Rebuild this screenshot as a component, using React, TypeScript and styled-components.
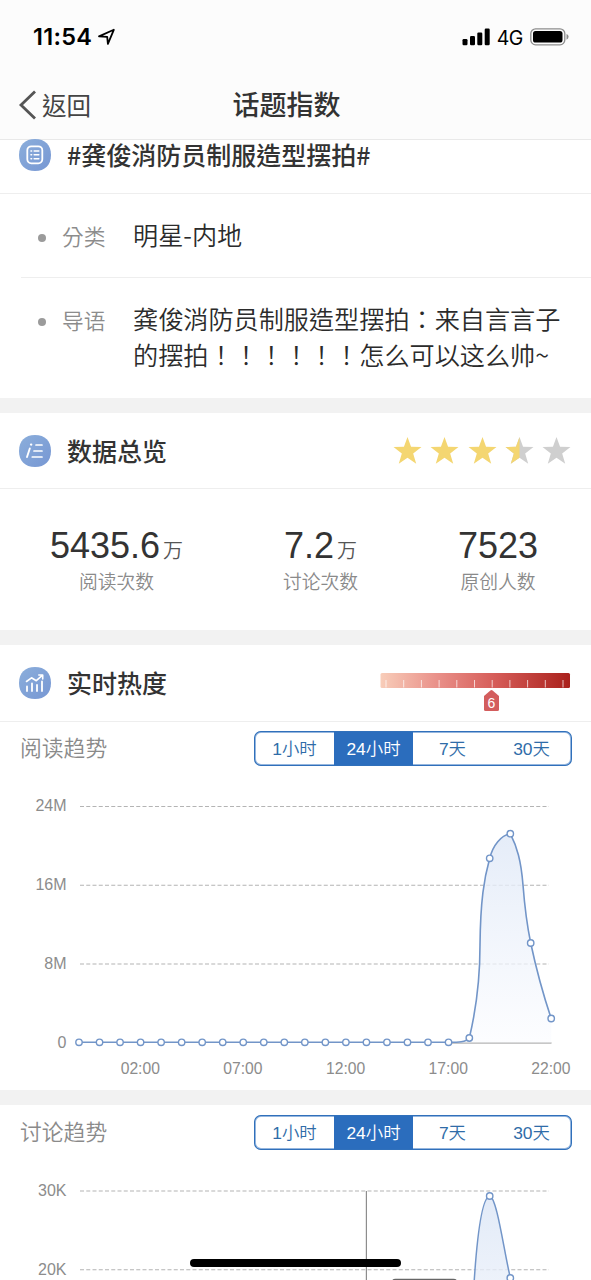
import React from "react";
import styled, { createGlobalStyle } from "styled-components";

const GlobalStyle = createGlobalStyle`
  * { box-sizing: border-box; }
  html, body { margin: 0; padding: 0; background: #fff; }
  body {
    font-family: "Liberation Sans", "Noto Sans CJK TC", sans-serif;
    color: #333;
    overflow: hidden;
  }
`;

const Screen = styled.div`
  position: relative;
  width: 591px;
  height: 1280px;
  overflow: hidden;
  background: #fff;
`;

const Header = styled.header`
  height: 140px;
  background: #fcfcfc;
  border-bottom: 1px solid #e9e9e9;
`;

const StatusBar = styled.div`
  display: flex;
  justify-content: space-between;
  align-items: center;
  height: 72px;
  padding: 2px 22px 0 33px;
  color: #000;
`;

const StatusGroup = styled.div<{ $gap: number }>`
  display: flex;
  align-items: center;
  gap: ${(p) => p.$gap}px;
`;

const Clock = styled.span`
  font: 600 23.5px/28px Inter, sans-serif;
  letter-spacing: 0.3px;
`;

const Network = styled.span`
  font: 400 19.5px/28px Inter, sans-serif;
  letter-spacing: -0.4px;
  padding-top: 1px;
`;

const NavBar = styled.div`
  display: grid;
  grid-template-columns: 150px 1fr 168px;
  align-items: center;
  height: 66px;
  padding: 0 18px;
`;

const Back = styled.button`
  display: flex;
  align-items: center;
  gap: 5px;
  padding: 0;
  border: 0;
  background: none;
  color: #444;
  font: 400 24.5px/34px "Noto Sans CJK TC", sans-serif;

  span { padding-bottom: 1px; }
`;

const NavTitle = styled.h1`
  margin: 0;
  padding-bottom: 3px;
  text-align: center;
  font: 500 27px/40px "Noto Sans CJK TC", sans-serif;
  color: #333;
`;

const SectionHead = styled.div<{ $height: number; $lift?: number }>`
  display: flex;
  align-items: center;
  gap: 16px;
  height: ${(p) => p.$height}px;
  padding: 0 20px ${(p) => p.$lift ?? 0}px 19px;
  border-bottom: 1px solid #eeeeee;
`;

const SectionTitle = styled.h2`
  flex: 1;
  margin: 0;
  padding-bottom: 2px;
  font: 500 25px/30px "Noto Sans CJK TC", sans-serif;
  color: #333;
`;

const DetailRow = styled.div<{ $height: number; $line?: boolean }>`
  display: flex;
  align-items: flex-start;
  height: ${(p) => p.$height}px;
  margin-left: 21px;
  padding: 22px 20px 0 17px;
  border-bottom: ${(p) => (p.$line ? "1px solid #eeeeee" : "0")};
`;

const Bullet = styled.i`
  width: 8px;
  height: 8px;
  margin: 18px 16px 0 0;
  border-radius: 50%;
  background: #9b9b9b;
`;

const DetailLabel = styled.span`
  width: 71px;
  font: 350 21.7px/36px "Noto Sans CJK TC", sans-serif;
  color: #8c8c8c;
  padding-top: 2px;
`;

const DetailText = styled.p`
  flex: 1;
  margin: 0;
  white-space: nowrap;
  font: 350 25.15px/36px "Noto Sans CJK TC", sans-serif;
  color: #2b2b2b;
`;

const Divider = styled.div<{ $height: number }>`
  height: ${(p) => p.$height}px;
  background: #f2f2f2;
`;

const Stars = styled.div`
  display: flex;
  gap: 8.2px;
`;

const Stats = styled.div`
  display: grid;
  grid-template-columns: 233px 175px 1fr;
  height: 141px;
  padding-top: 34px;
`;

const Stat = styled.div`
  display: flex;
  flex-direction: column;
  align-items: center;

  &:last-child { padding-right: 3px; }
`;

const StatValue = styled.div`
  height: 44px;
  font: 400 36px/45px "Liberation Sans", sans-serif;
  color: #333;
  white-space: nowrap;
`;

const Unit = styled.span`
  display: inline-block;
  margin-left: 3px;
  font: 350 20px/30px "Noto Sans CJK TC", sans-serif;
  color: #555;
`;

const StatLabel = styled.div`
  font: 350 18.8px/27px "Noto Sans CJK TC", sans-serif;
  color: #8a8a8a;
`;

const TrendHead = styled.div<{ $top: number }>`
  display: flex;
  justify-content: space-between;
  align-items: flex-start;
  height: ${(p) => p.$top + 44}px;
  padding: ${(p) => p.$top}px 19px 0 20px;
`;

const TrendTitle = styled.h3`
  margin: 0;
  font: 350 21.8px/32px "Noto Sans CJK TC", sans-serif;
  color: #8a8a8a;
`;

const Tabs = styled.div`
  position: relative;
  display: grid;
  grid-template-columns: repeat(4, 1fr);
  width: 318px;
  height: 35px;
  padding: 1px;
  overflow: hidden;
  border-radius: 7px;
  background: #3472b8;

  &::after {
    content: "";
    position: absolute;
    inset: 0;
    border: 2px solid rgba(43, 109, 189, 0.5);
    border-radius: 7px;
    pointer-events: none;
  }
`;

const Tab = styled.button<{ $active?: boolean }>`
  padding: 0;
  border: 0;
  background: ${(p) => (p.$active ? "#2b6dbd" : "#fff")};
  color: ${(p) => (p.$active ? "#fff" : "#2f6ca8")};
  font: 350 17.4px/32px "Liberation Sans", "Noto Sans CJK TC", sans-serif;

  &:first-child { border-radius: 6px 0 0 6px; }
  &:last-child { border-radius: 0 6px 6px 0; }
`;

const Chart = styled.svg`
  display: block;
  font: 16px "Liberation Sans", sans-serif;
`;

const Heat = styled.svg`
  display: block;
  margin-top: 18px;
`;

const HomeIndicator = styled.div`
  position: absolute;
  left: 190px;
  bottom: 13px;
  width: 211px;
  height: 8px;
  border-radius: 4px;
  background: #000;
`;

const RANGES = ["1小时", "24小时", "7天", "30天"];

function RangeTabs() {
  return (
    <Tabs>
      {RANGES.map((r) => (
        <Tab key={r} $active={r === "24小时"}>{r}</Tab>
      ))}
    </Tabs>
  );
}

function Badge({ children, id }: { children: React.ReactNode; id: string }) {
  return (
    <svg width="32" height="32" viewBox="0 0 32 32" fill="none">
      <defs>
        <linearGradient id={id} x1="0" y1="0" x2="1" y2="1">
          <stop offset="0" stopColor="#8baedb" />
          <stop offset="1" stopColor="#7797d3" />
        </linearGradient>
      </defs>
      <path d="M16 0C26 0 32 6 32 16S26 32 16 32 0 26 0 16 6 0 16 0Z" fill={`url(#${id})`} />
      {children}
    </svg>
  );
}

const STAR = "M14.5 0.5L18 10.2L28.3 10.5L20.1 16.8L23.1 27L14.5 21.1L5.9 27L8.9 16.8L0.7 10.5L11 10.2Z";

function Star({ fill }: { fill: "full" | "half" | "none" }) {
  return (
    <svg width="29" height="29" viewBox="0.2 -0.4 28.6 28.6">
      <path d={STAR} fill={fill === "full" ? "#f4d671" : "#cfcfcf"} />
      {fill === "half" && (
        <path d="M14.5 0.5V21.1L5.9 27L8.9 16.8L0.7 10.5L11 10.2Z" fill="#f4d671" />
      )}
    </svg>
  );
}

function HeatScale() {
  return (
    <Heat width="191" height="42" viewBox="0 0 191 42">
      <defs>
        <linearGradient id="heat">
          <stop offset="0" stopColor="#f8cdb9" />
          <stop offset="0.3" stopColor="#e99089" />
          <stop offset="0.6" stopColor="#d65d59" />
          <stop offset="1" stopColor="#aa211c" />
        </linearGradient>
      </defs>
      <rect x="0.5" y="2" width="189.5" height="15" rx="1.5" fill="url(#heat)" />
      {Array.from({ length: 11 }, (_, i) => (
        <path key={i} d={`M${6 + i * 17.7} 9V16.5`} stroke="#fff" strokeOpacity="0.7" />
      ))}
      <path d="M111.5 19Q112 19 112.6 19.5L119 25V38.5Q119 40 117.5 40H105.5Q104 40 104 38.5V25L110.4 19.5Q111 19 111.5 19Z" fill="#d35d5d" />
      <text x="111.5" y="36.5" textAnchor="middle" fontSize="14" fontFamily="Liberation Sans" fill="#fff">6</text>
    </Heat>
  );
}

const STEP = 20.53;
const GRID = { stroke: "#b4b4b4", strokeWidth: 1.1, strokeDasharray: "4 2.25" };

function AreaFill({ id, y2 }: { id: string; y2: number }) {
  return (
    <linearGradient id={id} gradientUnits="userSpaceOnUse" x1="0" y1="10" x2="0" y2={y2}>
      <stop offset="0" stopColor="#d9e4f5" stopOpacity="0.85" />
      <stop offset="1" stopColor="#fbfcff" stopOpacity="0.7" />
    </linearGradient>
  );
}

function ReadChart() {
  const curve =
    "L448.6 267.3C458 267.3 466 267.2 469.3 263C476 235 480 208 480 170C480.5 125 484 104 489.7 83.3C493 70 501 60.5 510.3 58.7C517 72 521 85 523 110C525 136 528 155 530.7 168C536 193 544 222 551.2 243.5";
  const peaks = [[469.3, 263], [489.7, 83.3], [510.3, 58.7], [530.7, 168], [551.2, 243.5]];
  const dots = [...Array.from({ length: 19 }, (_, i) => [79 + i * STEP, 267.3]), ...peaks];
  return (
    <Chart width="591" height="315" viewBox="0 0 591 315">
      <defs><AreaFill id="read" y2={267} /></defs>
      {[31.5, 110.2, 189].map((y) => <path key={y} d={`M80 ${y}H549`} {...GRID} />)}
      <path d="M449 268H551.5" stroke="#b5b5b5" strokeWidth="1.3" />
      <path d={`M79 267.3${curve}V267.5H79Z`} fill="url(#read)" />
      <path d={`M79 267.3${curve}`} fill="none" stroke="#7295c8" strokeWidth="1.6" />
      {dots.map(([x, y], i) => (
        <circle key={i} cx={x} cy={y} r="3.2" fill="#fff" stroke="#7295c8" strokeWidth="1.4" />
      ))}
      <g fill="#8c8c8c" textAnchor="end">
        <text x="66.5" y="36">24M</text>
        <text x="66.5" y="115">16M</text>
        <text x="66.5" y="194">8M</text>
        <text x="66.5" y="272.5">0</text>
      </g>
      <g fill="#8c8c8c" textAnchor="middle" fontSize="15.7">
        {["02:00", "07:00", "12:00", "17:00", "22:00"].map((t, i) => (
          <text key={t} x={140.3 + i * STEP * 5} y="298.5">{t}</text>
        ))}
      </g>
    </Chart>
  );
}

function DiscussChart() {
  const curve = "M474 125C477 78 482 38.5 489.7 37C497 38.5 504 93 510.3 118.5";
  return (
    <Chart width="591" height="121" viewBox="0 0 591 121">
      <defs><AreaFill id="discuss" y2={267} /></defs>
      {[32, 110.8].map((y) => <path key={y} d={`M80 ${y}H549`} {...GRID} />)}
      <path d="M366.4 32V121" stroke="#8d8d8d" strokeWidth="1.2" />
      <path d={`${curve}L512 125Z`} fill="url(#discuss)" />
      <path d={curve} fill="none" stroke="#7295c8" strokeWidth="1.5" />
      <circle cx="489.7" cy="37" r="3.2" fill="#fff" stroke="#7295c8" strokeWidth="1.4" />
      <circle cx="510.3" cy="119" r="3.2" fill="#fff" stroke="#7295c8" strokeWidth="1.4" />
      <rect x="391.5" y="119.8" width="66" height="10" rx="4" fill="#666" />
      <g fill="#8c8c8c" textAnchor="end">
        <text x="66.5" y="36.5">30K</text>
        <text x="66.5" y="115.5">20K</text>
      </g>
    </Chart>
  );
}

export default function App() {
  return (
    <Screen>
      <GlobalStyle />
      <Header>
        <StatusBar>
          <StatusGroup $gap={6}>
            <Clock>11:54</Clock>
            <svg width="18" height="18" viewBox="0 0 18 18" fill="none">
              <path d="M1 8.4L15.8 1.8L9.9 15.8L9.2 8.8Z" stroke="#000" strokeWidth="1.8" strokeLinejoin="round" />
            </svg>
          </StatusGroup>
          <StatusGroup $gap={7}>
            <svg width="28" height="18" viewBox="0 0 28 18">
              <rect x="0.5" y="11" width="5" height="6.3" rx="1.2" />
              <rect x="8" y="8" width="5" height="9.3" rx="1.2" />
              <rect x="15.3" y="4.5" width="5" height="12.8" rx="1.2" />
              <rect x="22.7" y="0.5" width="5" height="16.8" rx="1.2" />
            </svg>
            <Network>4G</Network>
            <svg width="39" height="18" viewBox="0 0 39 18" fill="none">
              <rect x="0.8" y="0.8" width="34" height="16" rx="4.8" stroke="#8d8d8d" strokeWidth="1.3" />
              <rect x="3" y="3" width="29.5" height="11.6" rx="2.6" fill="#000" />
              <path d="M36.5 6Q38.6 6.8 38.6 8.8T36.5 11.7Z" fill="#8d8d8d" />
            </svg>
          </StatusGroup>
        </StatusBar>
        <NavBar>
          <Back>
            <svg width="19" height="30" viewBox="0 0 19 30" fill="none">
              <path d="M17 1.5L3 15L17 28.5" stroke="#555" strokeWidth="2.8" />
            </svg>
            <span>返回</span>
          </Back>
          <NavTitle>话题指数</NavTitle>
        </NavBar>
      </Header>

      <SectionHead $height={54} $lift={23}>
        <Badge id="b1">
          <g stroke="#fff" strokeLinecap="round">
            <rect x="8.3" y="7.3" width="15" height="17" rx="4" strokeWidth="1.8" />
            <path d="M12 12H12.6M15.2 12H19.8M12 15.8H12.6M15.2 15.8H19.8M12 19.7H12.6M15.2 19.7H19.8" strokeWidth="1.6" />
          </g>
        </Badge>
        <SectionTitle>#龚俊消防员制服造型摆拍#</SectionTitle>
      </SectionHead>
      <DetailRow $height={84} $line>
        <Bullet />
        <DetailLabel>分类</DetailLabel>
        <DetailText>明星-内地</DetailText>
      </DetailRow>
      <DetailRow $height={120}>
        <Bullet />
        <DetailLabel>导语</DetailLabel>
        <DetailText>龚俊消防员制服造型摆拍：来自言言子<br />的摆拍！！！！！！怎么可以这么帅~</DetailText>
      </DetailRow>
      <Divider $height={15} />

      <SectionHead $height={76}>
        <Badge id="b2">
          <g stroke="#fff" strokeLinecap="round">
            <path d="M10.8 13.5L8 22" strokeWidth="1.9" />
            <path d="M12 9.6H12.3" strokeWidth="2.2" />
            <path d="M17 10H23M15 16H23M13.3 22H23" strokeWidth="1.7" />
          </g>
        </Badge>
        <SectionTitle>数据总览</SectionTitle>
        <Stars>
          <Star fill="full" /><Star fill="full" /><Star fill="full" /><Star fill="half" /><Star fill="none" />
        </Stars>
      </SectionHead>
      <Stats>
        <Stat><StatValue>5435.6<Unit>万</Unit></StatValue><StatLabel>阅读次数</StatLabel></Stat>
        <Stat><StatValue>7.2<Unit>万</Unit></StatValue><StatLabel>讨论次数</StatLabel></Stat>
        <Stat><StatValue>7523</StatValue><StatLabel>原创人数</StatLabel></Stat>
      </Stats>
      <Divider $height={15} />

      <SectionHead $height={77}>
        <Badge id="b3">
          <g stroke="#fff" strokeLinecap="round" strokeLinejoin="round">
            <path d="M8 19.5V24M13 16.5V24M18 18V24M23 14.5V24" strokeWidth="1.8" />
            <path d="M7.5 14.5L12.5 10.8L17.3 13.7L23 8.7M19.8 8H23.7V12" strokeWidth="1.6" />
          </g>
        </Badge>
        <SectionTitle>实时热度</SectionTitle>
        <HeatScale />
      </SectionHead>
      <TrendHead $top={9}><TrendTitle>阅读趋势</TrendTitle><RangeTabs /></TrendHead>
      <ReadChart />
      <Divider $height={15} />
      <TrendHead $top={10}><TrendTitle>讨论趋势</TrendTitle><RangeTabs /></TrendHead>
      <DiscussChart />
      <HomeIndicator />
    </Screen>
  );
}
